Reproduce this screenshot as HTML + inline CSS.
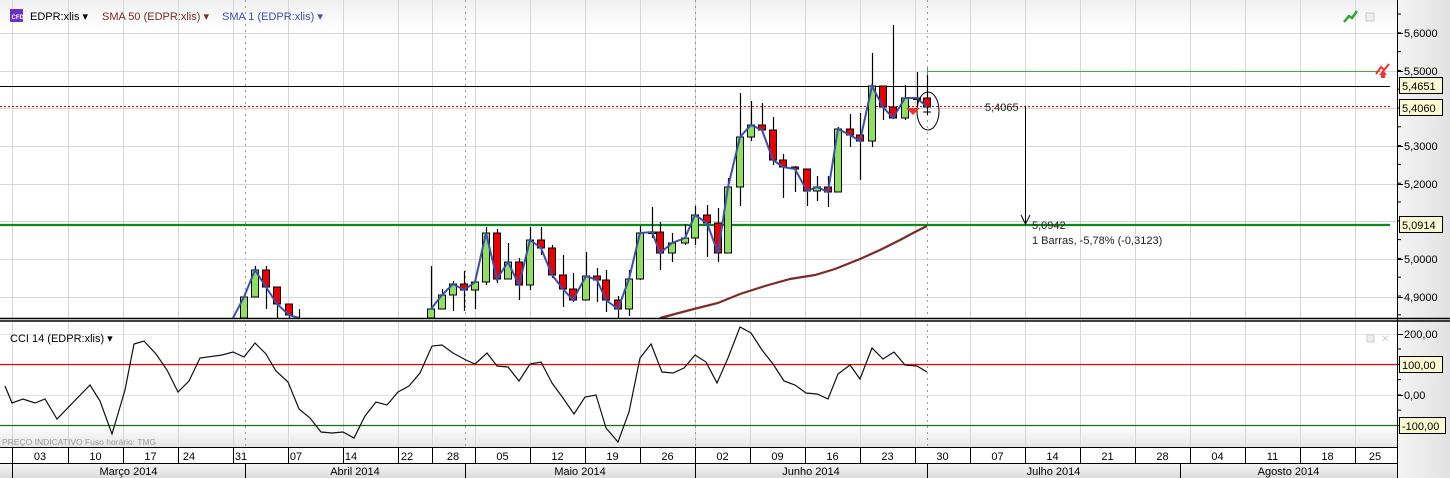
<!DOCTYPE html>
<html><head><meta charset="utf-8"><style>
body{margin:0;width:1450px;height:478px;overflow:hidden;background:#fff;font-family:"Liberation Sans",sans-serif;}
svg{display:block}
</style></head><body>
<svg id="s" width="1450" height="478" xmlns="http://www.w3.org/2000/svg" font-family="Liberation Sans, sans-serif">
<defs>
<linearGradient id="ax" x1="0" y1="0" x2="1" y2="0"><stop offset="0" stop-color="#f4f4f4"/><stop offset="1" stop-color="#e2e2e2"/></linearGradient>
<linearGradient id="mo" x1="0" y1="0" x2="0" y2="1"><stop offset="0" stop-color="#f6f6f6"/><stop offset="1" stop-color="#dcdcdc"/></linearGradient>
<linearGradient id="hd" x1="0" y1="0" x2="0" y2="1"><stop offset="0" stop-color="#f0f0f0"/><stop offset="1" stop-color="#ffffff"/></linearGradient>
<linearGradient id="bt" x1="0" y1="0" x2="0" y2="1"><stop offset="0" stop-color="#ffffff"/><stop offset="1" stop-color="#e6e6e6"/></linearGradient>
</defs>
<rect x="0" y="0" width="1397" height="30" fill="url(#hd)"/>
<rect x="0" y="425" width="1397" height="22" fill="url(#bt)"/>
<g id="grid"></g>
<g id="main"></g>
<g id="cci"></g>
</svg>
<script>
const S=document.getElementById('s');const NS='http://www.w3.org/2000/svg';
function el(t,a,p,txt){const e=document.createElementNS(NS,t);for(const k in a)e.setAttribute(k,a[k]);if(txt!=null)e.textContent=txt;(p||S).appendChild(e);return e;}
const G=document.getElementById('grid'),M=document.getElementById('main'),C=document.getElementById('cci');
const bounds=[12,68,123,178,233,288,343,398,432,475,530,585,640,695,750,805,860,915,970,1025,1080,1135,1190,1245,1300,1355];
const monthDot=[245,465,695,927];
bounds.forEach(x=>{el('line',{x1:x+.5,y1:0,x2:x+.5,y2:446,stroke:'#d6d6d6','stroke-width':1},G);});
monthDot.forEach(x=>{el('line',{x1:x+.5,y1:0,x2:x+.5,y2:446,stroke:'#999','stroke-width':1,'stroke-dasharray':'2,4'},G);});
[33,71,108,146,184,221,259,297].forEach(y=>el('line',{x1:0,y1:y+.5,x2:1397,y2:y+.5,stroke:'#d6d6d6'},G));
[334,395].forEach(y=>el('line',{x1:0,y1:y+.5,x2:1397,y2:y+.5,stroke:'#e4e4e4'},G));
el('line',{x1:0,y1:86.5,x2:1390,y2:86.5,stroke:'#000'},M);
el('line',{x1:0,y1:106.5,x2:1390,y2:106.5,stroke:'#e00','stroke-dasharray':'2,2'},M);
el('line',{x1:0,y1:225,x2:1390,y2:225,stroke:'#0a8a1e','stroke-width':2.2},M);
el('line',{x1:927,y1:71.5,x2:1380,y2:71.5,stroke:'#46a83c'},M);
el('line',{x1:927.5,y1:68,x2:927.5,y2:75,stroke:'#46a83c'},M);
el('polyline',{points:'660,318 690,310 718,303 740,294 765,286 790,279 815,275 835,269 860,259 880,250 900,240 915,232 927,226',fill:'none',stroke:'#7b2b2b','stroke-width':2.2},M);
const segs=[[318,[[244,297,297,318],[255,270,266,297],[266,287,266,309],[277,304,287,318],[289,315,305,318],[299,318,309,318]]],
[318,[[431,309,266,318],[442,295,289,306],[453,284,281,311],[464,290,271,311],[475,282,279,309],[486,233,227,285],[497,279,229,283],[508,262,243,277],[519,285,258,300],[530,240,227,290],[541,248,227,255],[552,275,245,278],[563,289,255,307],[573,300,273,302],[586,276,252,300],[597,280,268,302],[606,300,270,312],[618,309,296,318],[629,279,270,316],[640,233,226,280],[652,232,207,238],[660,253,222,270],[672,243,233,262],[685,238,224,245],[695,215,206,245],[707,223,205,257],[718,253,208,262],[728,187,178,250],[740,137,93,206],[751,125,101,141],[762,130,103,133],[773,160,117,165],[783,167,154,198],[795,169,166,192],[807,191,173,206],[817,187,176,201],[828,192,176,207],[838,129,127,191],[850,135,114,147],[860,141,113,180],[872,86,53,147],[883,107,90,120],[893,118,25,119],[905,98,85,120],[917,98,72,106],[927,107,75,115]]]];
const lines=[];
segs.forEach(([o0,arr])=>{let o=o0;let pts=[];if(arr[0][0]===244)pts.push('233,318');
arr.forEach(([x,c,h,l])=>{const lo=Math.min(318,Math.max(l,o,c));el('line',{x1:x+.5,y1:h,x2:x+.5,y2:lo,stroke:'#000','stroke-width':1.2},M);
const t=Math.min(o,c),b=Math.min(318,Math.max(o,c));const up=c<=o;
if(!(x===299))el('rect',{x:x-3.5,y:t,width:7,height:Math.max(1.5,b-t),fill:up?'#90e060':'#ee0000',stroke:'#000','stroke-width':1},M);
pts.push(x+','+c);o=c;});lines.push(pts.join(' '));});
lines.forEach(p=>el('polyline',{points:p,fill:'none',stroke:'#3a4fb0','stroke-width':2},M));
el('rect',{x:0,y:319,width:1397,height:2,fill:'#fff'},M);
el('line',{x1:0,y1:318.5,x2:1397,y2:318.5,stroke:'#000','stroke-width':1.5},M);
el('line',{x1:0,y1:321,x2:1397,y2:321,stroke:'#000','stroke-width':1.5},M);
el('ellipse',{cx:928,cy:111,rx:11,ry:19,fill:'none',stroke:'#000'},M);
el('polygon',{points:'906,108 920,108 913,115',fill:'#e33'},M);
el('line',{x1:923,y1:112,x2:931,y2:112,stroke:'#000'},M);
el('text',{x:985,y:111,'font-size':11,fill:'#222'},M,'5,4065');
el('line',{x1:1025.5,y1:106,x2:1025.5,y2:224,stroke:'#000'},M);
el('polyline',{points:'1021,215 1025.5,224 1030,215',fill:'none',stroke:'#000'},M);
el('text',{x:1032,y:229,'font-size':11,fill:'#222'},M,'5,0942');
el('text',{x:1032,y:244,'font-size':11,fill:'#222'},M,'1 Barras, -5,78% (-0,3123)');
el('rect',{x:10,y:9,width:13,height:13,fill:'#6a30c8',rx:1},M);
el('text',{x:11.5,y:19,'font-size':6,fill:'#fff','font-weight':'bold'},M,'CFD');
el('text',{x:30,y:20,'font-size':11,fill:'#000'},M,'EDPR:xlis ▾');
el('text',{x:102,y:20,'font-size':11,fill:'#7a2a2a'},M,'SMA 50 (EDPR:xlis) ▾');
el('text',{x:222,y:20,'font-size':11,fill:'#3a4fb0'},M,'SMA 1 (EDPR:xlis) ▾');
el('polyline',{points:'1344,22 1349,16 1352,18 1357,11',fill:'none',stroke:'#2ea82e','stroke-width':2.5},M);
el('rect',{x:1366,y:13,width:8,height:8,fill:'#eee',stroke:'#ccc'},M);
el('polyline',{points:'1376,74 1381,67 1384,70 1389,64',fill:'none',stroke:'#e33','stroke-width':2},M);
el('polygon',{points:'1383,70 1387,75 1385,75 1385,78 1381,78 1381,75 1379,75',fill:'#e33'},M);
el('rect',{x:1367,y:335,width:7,height:7,fill:'#eee',stroke:'#ccc'},M);
el('text',{x:1381,y:342,'font-size':10,fill:'#ccc'},M,'✕');
el('line',{x1:0,y1:364.5,x2:1397,y2:364.5,stroke:'#f00','stroke-width':1.2},C);
el('line',{x1:0,y1:425.5,x2:1397,y2:425.5,stroke:'#1a6e1a','stroke-width':1.2},C);
el('text',{x:10,y:342,'font-size':11,fill:'#000'},C,'CCI 14 (EDPR:xlis) ▾');
el('polyline',{points:'5,386 12,403 23,399 35,403 45,399 57,419 90,385 100,401 112,434 125,390 134,344 144,341 156,354 167,370 178,392 189,381 200,358 222,355 233,352 244,357 255,343 266,354 276,371 288,382 299,409 310,418 321,432 332,433 343,432 354,438 365,416 376,402 387,405 398,392 409,386 420,373 432,346 442,345 453,353 466,360 475,364 487,353 497,366 508,367 519,381 530,364 541,362 552,383 563,398 574,414 585,397 596,395 606,428 618,442 629,412 640,358 651,344 662,372 673,373 684,368 695,355 706,362 717,383 728,358 740,327 751,333 762,350 773,364 784,381 795,385 806,393 817,394 828,399 838,374 850,365 860,379 872,348 883,359 894,352 905,365 917,366 927,372',fill:'none',stroke:'#111','stroke-width':1.2},C);
el('text',{x:2,y:445,'font-size':8.5,fill:'#999'},C,'PREÇO INDICATIVO   Fuso horário: TMG');
el('rect',{x:0,y:447,width:1397,height:16,fill:'#fff'});
el('rect',{x:0,y:463,width:1397,height:15,fill:'url(#mo)'});
el('line',{x1:0,y1:447.5,x2:1397,y2:447.5,stroke:'#000'});
el('line',{x1:0,y1:463.5,x2:1397,y2:463.5,stroke:'#000'});
const labs=['03','10','17','24','31','07','14','22','28','05','12','19','26','02','09','16','23','30','07','14','21','28','04','11','18','25'];
const override={3:189,4:241,5:296,6:351,7:407,8:453,25:1375};
const bx=bounds.concat([1390]);
labs.forEach((t,i)=>{const x0=bx[i],x1=bx[i+1];el('line',{x1:x0+.5,y1:447,x2:x0+.5,y2:463,stroke:'#000'});
const cx=override[i]!=null?override[i]:(x0+x1)/2;el('text',{x:cx,y:460,'font-size':11,'text-anchor':'middle',fill:'#000'},null,t);});
const mons=[[12,245,'Março 2014'],[245,465,'Abril 2014'],[465,695,'Maio 2014'],[695,927,'Junho 2014'],[927,1180,'Julho 2014'],[1180,1397,'Agosto 2014']];
mons.forEach(([a,b,t])=>{el('line',{x1:a+.5,y1:463,x2:a+.5,y2:478,stroke:'#000'});el('text',{x:(a+b)/2,y:475,'font-size':11,'text-anchor':'middle',fill:'#000'},null,t);});
el('rect',{x:1397,y:0,width:53,height:478,fill:'url(#ax)'});
el('line',{x1:1397.5,y1:0,x2:1397.5,y2:478,stroke:'#000'});
el('line',{x1:1397,y1:318.5,x2:1450,y2:318.5,stroke:'#000','stroke-width':1.5});
el('line',{x1:1397,y1:321,x2:1450,y2:321,stroke:'#000','stroke-width':1.5});
for(let y=14;y<318;y+=18.8){el('line',{x1:1397,y1:y,x2:1401,y2:y,stroke:'#000'});}
[[33,'5,6000'],[71,'5,5000'],[146,'5,3000'],[184,'5,2000'],[259,'5,0000'],[297,'4,9000']].forEach(([y,t])=>{el('line',{x1:1397,y1:y+.5,x2:1403,y2:y+.5,stroke:'#000'});el('text',{x:1404,y:y+4,'font-size':11,fill:'#000'},null,t);});
for(let y=349;y<440;y+=15.3){el('line',{x1:1397,y1:y,x2:1401,y2:y,stroke:'#000'});}
[[334,'200,00'],[395,'0,00']].forEach(([y,t])=>{el('line',{x1:1397,y1:y+.5,x2:1403,y2:y+.5,stroke:'#000'});el('text',{x:1404,y:y+4,'font-size':11,fill:'#000'},null,t);});
[[86,'5,4651'],[108,'5,4060'],[225,'5,0914'],[365,'100,00'],[426,'-100,00']].forEach(([y,t])=>{el('rect',{x:1399.5,y:y-8.5,width:t.length>6?46:43,height:16,fill:'#fafad2',stroke:'#000'});el('text',{x:1402,y:y+4,'font-size':11,fill:'#000'},null,t);});
</script>
</body></html>
